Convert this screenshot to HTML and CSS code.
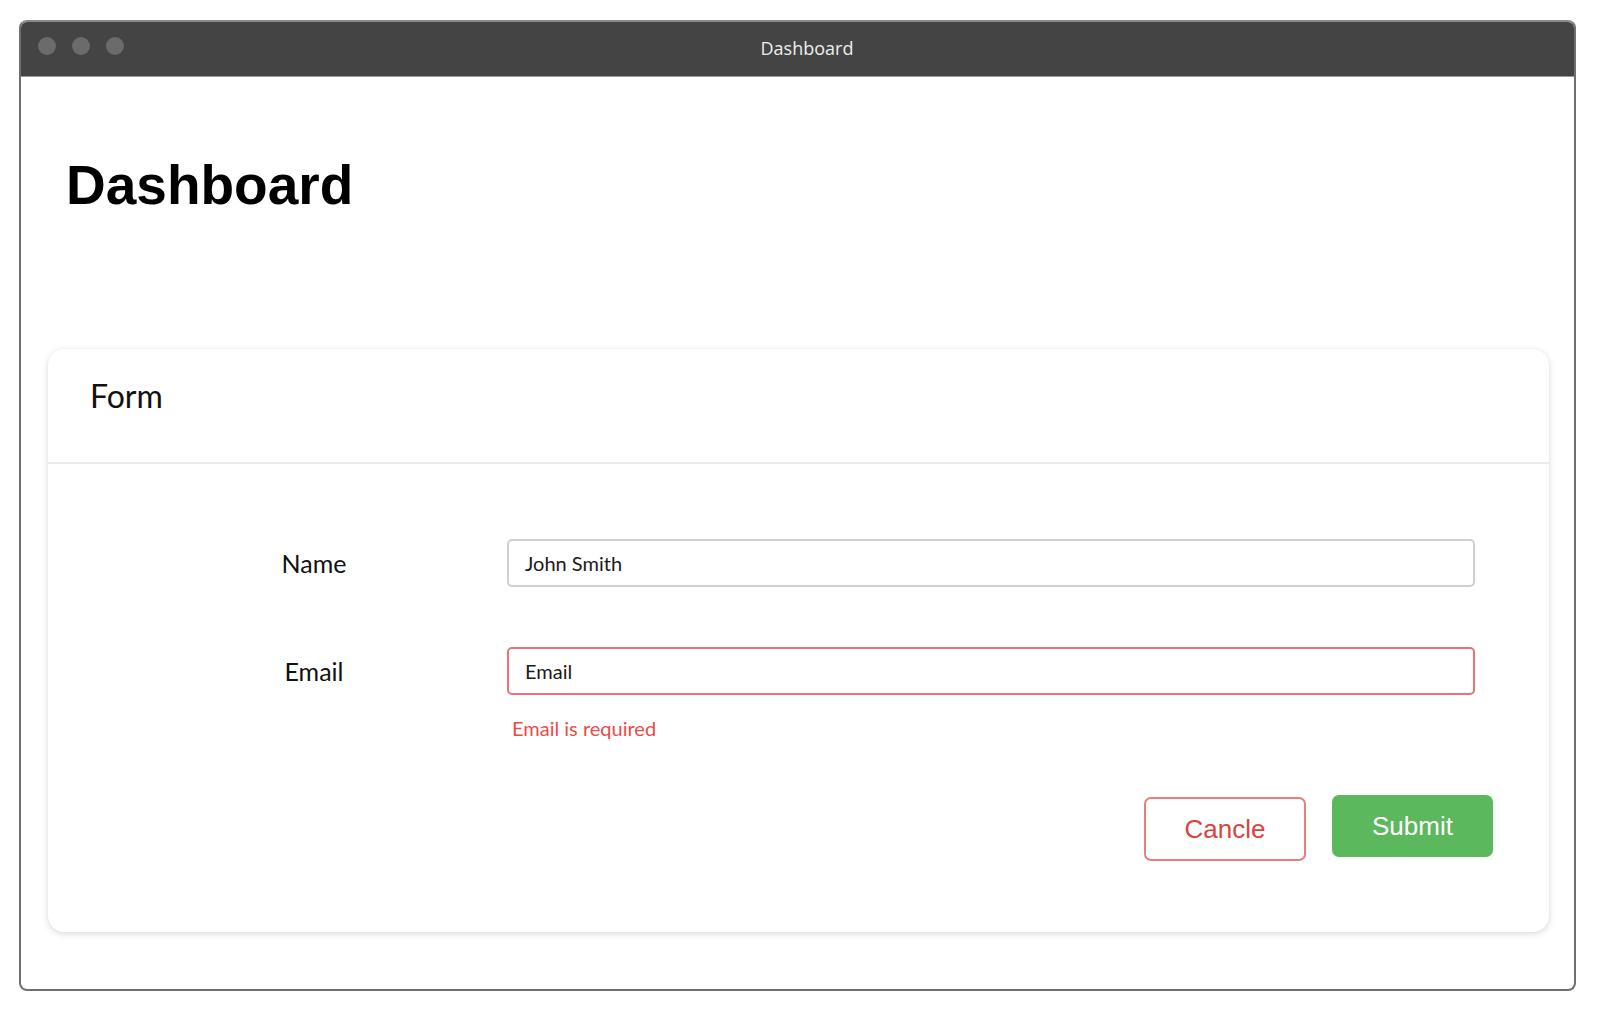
FILE: index.html
```html
<!DOCTYPE html>
<html lang="en">
<head>
<meta charset="utf-8">
<title>Dashboard</title>
<link rel="stylesheet" href="styles.css">
</head>
<body>
<div class="window">
  <div class="titlebar">
    <div class="dots"><span class="dot"></span><span class="dot"></span><span class="dot"></span></div>
    <div class="wintitle">Dashboard</div>
  </div>
  <div class="content">
    <h1 class="page-title">Dashboard</h1>
    <div class="card">
      <div class="card-header">Form</div>
      <div class="card-body">
        <div class="form-grid">
          <label class="label" for="name">Name</label>
          <div class="field">
            <input class="input" id="name" type="text" value="John Smith">
          </div>
          <label class="label" for="email">Email</label>
          <div class="field">
            <input class="input input-error" id="email" type="text" value="Email">
            <div class="error">Email is required</div>
          </div>
        </div>
        <div class="actions">
          <button class="btn btn-cancel" type="button">Cancle</button>
          <button class="btn btn-submit" type="button">Submit</button>
        </div>
      </div>
    </div>
  </div>
</div>
</body>
</html>
```

FILE: styles.css
```css
html, body {
  margin: 0;
  padding: 0;
  background: #ffffff;
}

.window {
  box-sizing: border-box;
  width: 1557px;
  height: 971px;
  margin: 20px 0 0 19px;
  border: 2px solid #6f6f6f;
  border-top-color: #8a8a8a;
  border-radius: 8px;
  overflow: hidden;
  display: flex;
  flex-direction: column;
  background: #ffffff;
}

.titlebar {
  box-sizing: border-box;
  height: 55px;
  flex: none;
  background: #444444;
  border-bottom: 1px solid #9a9a9a;
  display: flex;
  align-items: center;
  padding: 0 84px 6px 17px;
}

.dots {
  display: flex;
  gap: 16px;
}

.dot {
  width: 18px;
  height: 18px;
  border-radius: 50%;
  background: #6b6b6b;
}

.wintitle {
  flex: 1;
  margin-top: 4px;
  text-align: center;
  font-family: "Open Sans", "Noto Sans", sans-serif;
  font-size: 18px;
  color: #eeeeee;
}

.content {
  padding: 81px 25px 0 27px;
}

.page-title {
  margin: 0 0 136px 0;
  padding-left: 18px;
  font-family: "Liberation Sans", Arial, sans-serif;
  font-weight: bold;
  font-size: 55px;
  line-height: 55px;
  color: #000000;
}

.card {
  background: #ffffff;
  border-radius: 16px;
  box-shadow: 0 2px 7px rgba(0, 0, 0, 0.14), 0 0 2px rgba(0, 0, 0, 0.05);
}

.card-header {
  padding: 28px 42px 47px;
  border-bottom: 2px solid #ebebeb;
  font-family: Lato, "Noto Sans", sans-serif;
  font-size: 32px;
  line-height: 38px;
  color: #111111;
}

.card-body {
  padding: 75px 56px 71px 82px;
}

.form-grid {
  display: grid;
  grid-template-columns: 368px 968px;
  column-gap: 9px;
  row-gap: 60px;
}

.label {
  height: 48px;
  display: flex;
  align-items: center;
  justify-content: center;
  font-family: Lato, "Noto Sans", sans-serif;
  font-size: 25px;
  color: #111111;
}

.field {
  display: flex;
  flex-direction: column;
}

.input {
  box-sizing: border-box;
  width: 968px;
  height: 48px;
  margin: 0;
  padding: 0 16px;
  border: 2px solid #d0d0d0;
  border-radius: 5px;
  background: #ffffff;
  font-family: Lato, "Noto Sans", sans-serif;
  font-size: 20px;
  color: #1a1a1a;
  outline: none;
}

.input-error {
  border-color: #f26f6f;
}

.error {
  margin-top: 21px;
  padding-left: 5px;
  font-family: Lato, "Noto Sans", sans-serif;
  font-size: 20px;
  line-height: 24px;
  color: #ec4a4a;
}

.actions {
  display: flex;
  justify-content: flex-end;
  align-items: flex-start;
  gap: 26px;
  margin-top: 55px;
}

.btn {
  box-sizing: border-box;
  margin: 0;
  padding: 0;
  border-radius: 7px;
  font-family: "Liberation Sans", Arial, sans-serif;
  font-size: 26px;
  cursor: pointer;
}

.btn-cancel {
  width: 162px;
  height: 64px;
  margin-top: 2px;
  border: 2px solid #e77d7d;
  background: #ffffff;
  color: #d9443f;
}

.btn-submit {
  width: 161px;
  height: 62px;
  border: none;
  background: #5cb85c;
  color: #ffffff;
}
```
